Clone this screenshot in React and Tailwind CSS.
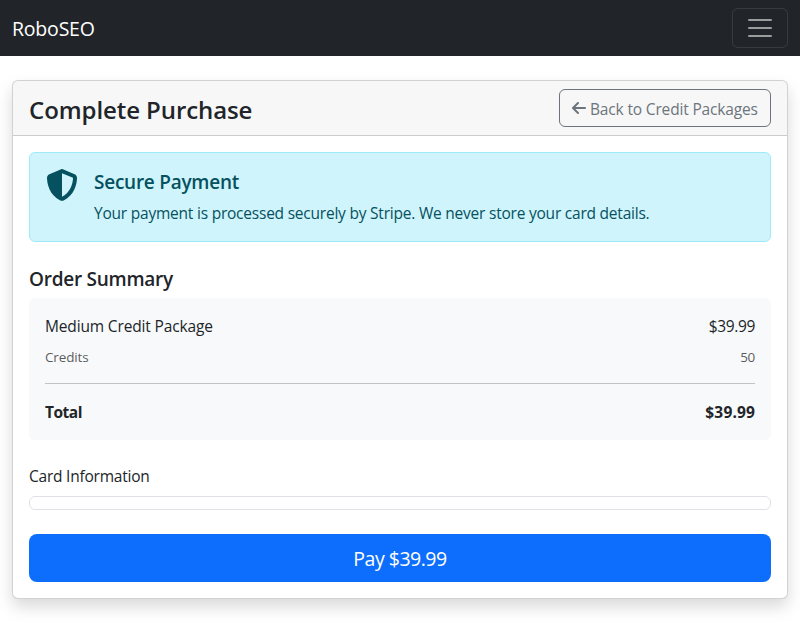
import { FaArrowLeft, FaShieldHalved } from "react-icons/fa6";

function Navbar() {
  return (
    <nav className="flex h-14 items-center justify-between bg-[#212529] px-3">
      <a className="pt-0.5 text-[19.5px] leading-7 tracking-[-0.2px] text-white">RoboSEO</a>
      <button
        aria-label="Toggle navigation"
        className="flex h-10 w-14 items-center justify-center rounded-md border border-white/10"
      >
        <svg viewBox="0 0 30 30" className="size-[30px]" fill="none">
          <path
            d="M4 7h22M4 15h22M4 23h22"
            stroke="rgba(255,255,255,0.55)"
            strokeWidth="2"
            strokeLinecap="round"
            strokeMiterlimit="10"
          />
        </svg>
      </button>
    </nav>
  );
}

function SecureNotice() {
  return (
    <div className="mb-6 flex rounded-md border border-[#9eeaf9] bg-[#cff4fc] p-4 text-[#055160]">
      <FaShieldHalved className="mr-4 size-8 shrink-0" />
      <div>
        <h5 className="mb-2 pt-0.5 text-[19px] leading-[22px] font-semibold tracking-[-0.25px]">Secure Payment</h5>
        <p className="text-[15.5px] leading-6 tracking-[-0.22px]">
          Your payment is processed securely by Stripe. We never store your card details.
        </p>
      </div>
    </div>
  );
}

function OrderSummary() {
  return (
    <section className="mb-6">
      <h5 className="mb-2 pt-0.5 text-[19px] leading-[22px] font-semibold tracking-[-0.25px]">Order Summary</h5>
      <div className="rounded-md bg-[#f8f9fa] p-4">
        <div className="mb-2 flex justify-between leading-6">
          <span className="tracking-[-0.15px]">Medium Credit Package</span>
          <span className="tracking-[-0.35px]">$39.99</span>
        </div>
        <div className="flex justify-between pt-0.5 text-[13.5px] leading-[19px] text-[#212529]/75">
          <span className="tracking-[-0.15px]">Credits</span>
          <span className="tracking-[-0.3px]">50</span>
        </div>
        <hr className="my-4 border-[#212529]/25" />
        <div className="flex justify-between leading-6 font-bold">
          <span className="tracking-[-0.5px]">Total</span>
          <span className="tracking-[0.15px]">$39.99</span>
        </div>
      </div>
    </section>
  );
}

export default function App() {
  return (
    <div className="min-h-[623px] bg-white font-['Open_Sans',sans-serif] text-[15.5px] text-[#212529]">
      <Navbar />
      <main className="px-3 pt-6">
        <div className="rounded-md border border-black/[0.176] bg-white shadow-[0_8px_16px_rgba(0,0,0,0.15)]">
          <header className="flex items-center justify-between rounded-t-[5px] border-b border-black/[0.176] bg-black/[0.03] px-4 py-2">
            <h4 className="pt-0.5 text-[24px] leading-[27px] font-semibold tracking-[-0.08px]">Complete Purchase</h4>
            <a className="flex h-[38px] w-[212px] items-center gap-1 rounded-md border border-[#6c757d] pl-3 whitespace-nowrap text-[#6c757d]">
              <FaArrowLeft className="h-4 w-3.5 shrink-0" />
              <span className="pt-0.5 leading-[22px] tracking-[-0.16px]">Back to Credit Packages</span>
            </a>
          </header>
          <div className="p-4">
            <SecureNotice />
            <OrderSummary />
            <div className="mb-6">
              <label className="mb-2 block leading-6 tracking-[-0.22px]">Card Information</label>
              <div className="h-3.5 rounded-md border border-[#dee2e6]" />
            </div>
            <button className="block h-12 w-full rounded-lg bg-[#0d6efd] pt-0.5 text-[19.5px] leading-7 tracking-[-0.5px] text-white">
              Pay $39.99
            </button>
          </div>
        </div>
      </main>
    </div>
  );
}
